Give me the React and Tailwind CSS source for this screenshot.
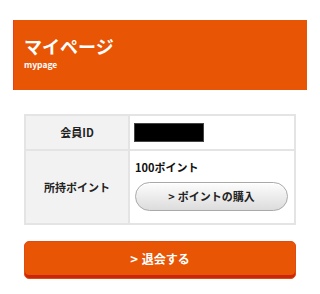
export default function App() {
  const jp = { fontFamily: '"Noto Sans CJK JP", "Noto Sans", sans-serif' };
  return (
    <div className="w-[320px] h-[294px] bg-white" style={jp}>
      <div className="pt-[20px] px-[13px]">
        <div className="h-[70px] bg-[#e85505] border-l border-[#f23b1a] pl-[10px] pt-[13px]">
          <div className="text-white font-bold text-[18px] leading-[26px]">マイページ</div>
          <div className="text-white font-bold text-[8.5px] leading-[11px]">mypage</div>
        </div>
      </div>
      <div className="px-[24px] mt-[24px]">
        <div className="border-2 border-[#e4e4e4]">
          <div className="flex border-b-2 border-[#e4e4e4] h-[35px]">
            <div className="w-[104px] bg-[#f2f2f2] border-r-2 border-[#e4e4e4] flex items-center justify-center text-[11px] font-bold text-[#222]">会員ID</div>
            <div className="flex-1 flex items-center pl-[4px]">
              <div className="w-[70px] h-[19px] bg-black border border-[#444]"></div>
            </div>
          </div>
          <div className="flex h-[72px]">
            <div className="w-[104px] bg-[#f2f2f2] border-r-2 border-[#e4e4e4] flex items-center justify-center text-[11px] font-bold text-[#222]">所持ポイント</div>
            <div className="flex-1 pl-[5px] pr-[6px] pt-[8px]">
              <div className="text-[11px] font-bold text-[#111] leading-[16px]">100ポイント</div>
              <div className="mt-[7px] h-[29px] rounded-full border border-[#a9a9a9] bg-gradient-to-b from-[#fdfdfd] to-[#dcdcdc] shadow-[inset_0_1px_0_#fff] flex items-center justify-center text-[11px] font-bold text-[#222]">
                <span className="mr-[3px]">&gt;</span>ポイントの購入
              </div>
            </div>
          </div>
        </div>
      </div>
      <div className="px-[24px] mt-[16px]">
        <div className="h-[38px] rounded-[5px] bg-[#e85505] border border-[#e14a10] shadow-[inset_0_-3px_0_#c9260c] flex items-center justify-center text-white font-bold text-[12px] pb-[2px]">
          <span className="mr-[4px] text-[13px]">&gt;</span>退会する
        </div>
      </div>
    </div>
  );
}
